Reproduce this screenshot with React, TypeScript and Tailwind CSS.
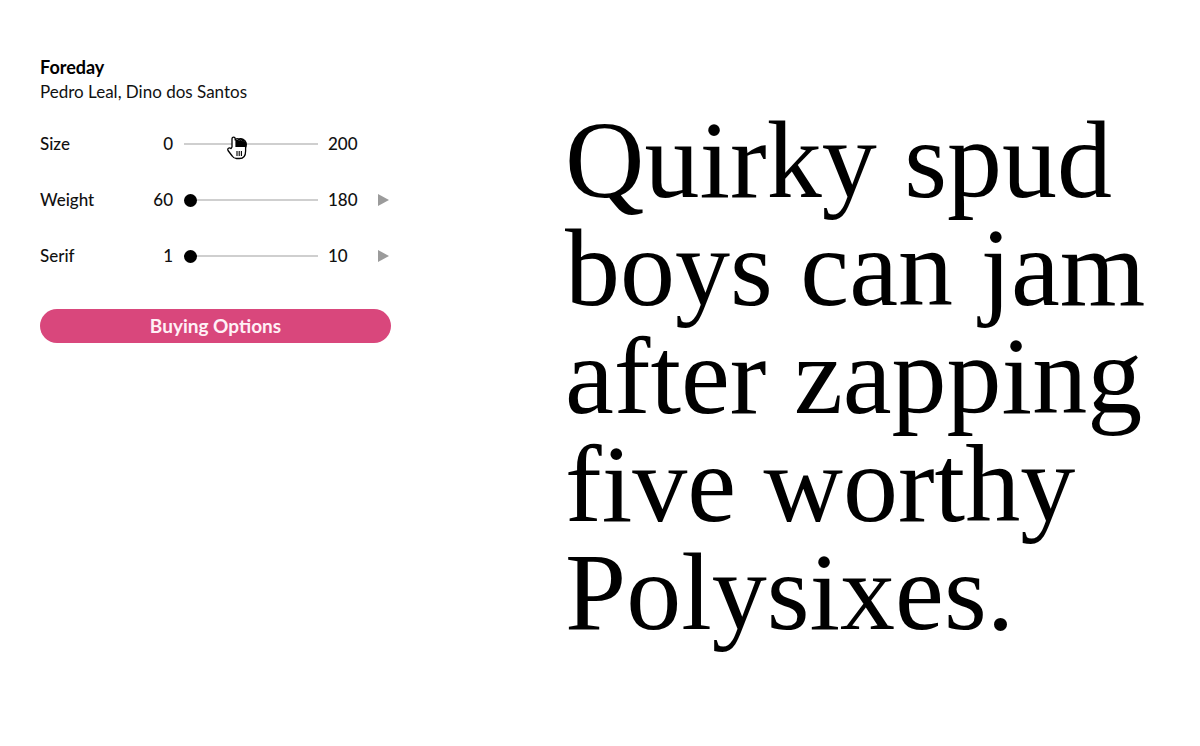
import React from 'react';

interface AxisRow {
  label: string;
  min: string;
  max: string;
  thumb: number;
  arrow: boolean;
  grab?: boolean;
}

const axes: AxisRow[] = [
  { label: 'Size', min: '0', max: '200', thumb: 56, arrow: false, grab: true },
  { label: 'Weight', min: '60', max: '180', thumb: 6, arrow: true },
  { label: 'Serif', min: '1', max: '10', thumb: 6, arrow: true },
];

// pointer "grabbing" hand sitting on the Size thumb
const GrabCursor: React.FC = () => (
  <svg width="21" height="24" viewBox="0 0 21 24" className="absolute -left-[8px] -top-[2px]">
    <path
      d="M6 11 L6 3 Q6 1.2 7.6 1.2 Q9.2 1.2 9.2 3 L9.2 4 Q9.6 2.6 11.2 2.6 Q12.6 2.6 13 4 Q13.6 3 15 3.2 Q16.4 3.5 16.6 5 Q17.4 4.4 18.4 4.8 Q19.6 5.4 19.6 7 L19.6 15 Q19.6 22.5 13.5 22.5 L10.5 22.5 Q7.8 22.5 6.2 20 L2 14.5 Q1.2 13 2.4 12.2 Q3.8 11.4 5 12.6 Z"
      fill="white"
      stroke="black"
      strokeWidth="1.3"
      strokeLinejoin="round"
    />
    <path d="M9.4 4.2 Q11 2.8 12.9 4.4 Q15 3.3 16.6 5.2 Q18.6 4.3 19.4 6.5 L19.4 11 L9.4 11 Z" fill="black" />
    <path d="M11 15 V20 M13.2 15 V20 M15.4 15 V20" stroke="black" strokeWidth="1.1" />
  </svg>
);

const Row: React.FC<{ axis: AxisRow }> = ({ axis }) => (
  <div className="flex items-center h-[22px] text-[17px] text-[#111]">
    <span className="w-[100px] font-medium">{axis.label}</span>
    <span className="w-[33px] text-right font-medium">{axis.min}</span>
    <div className="relative ml-[11px] w-[134px] h-[13px] flex items-center">
      <div className="w-full h-[2px] bg-[#cfcfcf]" />
      <div
        className="absolute top-0 w-[13px] h-[13px] rounded-full bg-black"
        style={{ left: axis.thumb - 6 }}
      >
        {axis.grab && <GrabCursor />}
      </div>
    </div>
    <span className="ml-[10px] w-[50px] font-medium">{axis.max}</span>
    {axis.arrow && (
      <svg width="11" height="12" viewBox="0 0 11 12">
        <path d="M0 0 L11 6 L0 12 Z" fill="#9b9b9b" />
      </svg>
    )}
  </div>
);

export default function App() {
  return (
    <div className="w-[1200px] h-[746px] bg-white flex overflow-hidden">
      {/* Controls */}
      <div className="w-[565px] shrink-0 pl-[40px] pt-[55px] font-['Lato',sans-serif]">
        <h1 className="text-[18px] leading-[24px] font-bold text-black">Foreday</h1>
        <p className="mt-[1px] text-[17px] leading-[24px] text-[#111]">Pedro Leal, Dino dos Santos</p>

        <div className="mt-[29px] flex flex-col gap-[34px]">
          {axes.map((a) => (
            <Row key={a.label} axis={a} />
          ))}
        </div>

        <button className="mt-[42px] w-[351px] h-[34px] rounded-full bg-[#d9477c] text-[19px] font-bold text-[#fff0f6] flex items-center justify-center">
          Buying Options
        </button>
      </div>

      {/* Specimen */}
      <div className="pt-[106px] font-['Liberation_Serif',serif] text-[110px] leading-[108px] text-black whitespace-nowrap">
        <p>Quirky spud</p>
        <p>boys can jam</p>
        <p>after zapping</p>
        <p>five worthy</p>
        <p>Polysixes.</p>
      </div>
    </div>
  );
}
